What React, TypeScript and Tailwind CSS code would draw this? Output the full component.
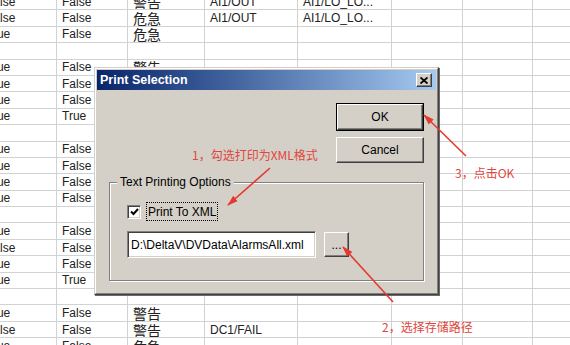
import React from "react";

const rows: string[][] = [
  ["False", "False", "警告", "AI1/OUT", "AI1/LO_LO..."],
  ["False", "False", "危急", "AI1/OUT", "AI1/LO_LO..."],
  ["True", "False", "危急"],
  [],
  ["True", "False", "警告"],
  ["True", "False"],
  ["True", "False"],
  ["True", "True"],
  [],
  ["True", "False"],
  ["True", "False"],
  ["True", "False"],
  ["True", "False"],
  [],
  ["True", "False"],
  ["False", "False"],
  ["True", "False"],
  ["True", "True"],
  [],
  ["True", "False", "警告"],
  ["False", "False", "警告", "DC1/FAIL"],
  ["True", "False", "危急"],
];

const isCjk = (s: string) => /[\u4e00-\u9fff]/.test(s);

function Sheet() {
  return (
    <div className="ml-[-19px] mt-[-6px] flex flex-col">
      {rows.map((row, r) => (
        <div
          key={r}
          className="grid h-[16.4px] grid-cols-[76px_71px_77px_93px_94px_71px_70px_80px] border-b border-[#d2d2d2]"
        >
          {Array.from({ length: 8 }).map((_, c) => {
            const v = row[c] ?? "";
            return (
              <div
                key={c}
                className="flex items-center overflow-hidden whitespace-nowrap border-r border-[#d2d2d2] pl-[5px] text-[12px] leading-none text-[#222]"
              >
                {isCjk(v) ? (
                  <span className="font-['Noto_Sans_CJK_SC',sans-serif] text-[14px]">{v}</span>
                ) : (
                  v
                )}
              </div>
            );
          })}
        </div>
      ))}
    </div>
  );
}

const raised =
  "border border-t-white border-l-white border-r-[#404040] border-b-[#404040] shadow-[inset_-1px_-1px_0_#808080] bg-[#d4d0c8]";
const sunken =
  "border border-t-[#808080] border-l-[#808080] border-r-white border-b-white shadow-[inset_1px_1px_0_#404040,inset_-1px_-1px_0_#d4d0c8] bg-white";

function Dialog() {
  return (
    <div className="absolute left-[94px] top-[67px] h-[228px] w-[345px] border border-t-[#d4d0c8] border-l-[#d4d0c8] border-r-[#404040] border-b-[#404040] bg-[#d4d0c8] shadow-[1px_1px_0_#6a6a6a]">
      <div className="flex h-full flex-col border border-t-white border-l-white border-r-[#808080] border-b-[#808080] p-px">
        <div className="flex h-[20px] items-center justify-between bg-linear-to-r from-[#0a246a] to-[#a6caf0] pl-[3px] pr-[4px]">
          <span className="text-[12.5px] font-bold text-white">Print Selection</span>
          <button className={`flex h-[14px] w-[16px] items-center justify-center ${raised}`}>
            <svg width="8" height="7" viewBox="0 0 8 7">
              <path d="M0.5 0.5 L7.5 6.5 M7.5 0.5 L0.5 6.5" stroke="#000" strokeWidth="1.8" />
            </svg>
          </button>
        </div>

        <div className="flex flex-col px-[12px] text-[12px] text-black">
          <div className="mt-[13px] flex flex-col items-end gap-[6px]">
            <button className="h-[28px] w-[88px] border border-black">
              <div className={`flex h-full w-full items-center justify-center ${raised}`}>OK</div>
            </button>
            <button className={`flex h-[26px] w-[88px] items-center justify-center ${raised}`}>
              Cancel
            </button>
          </div>

          <fieldset className="mt-[12px] border border-[#808080] pb-[22px] shadow-[1px_1px_0_#fff,inset_1px_1px_0_#fff]">
            <legend className="ml-[7px] bg-[#d4d0c8] px-[3px] leading-[14px]">Text Printing Options</legend>
            <div className="flex flex-col pl-[17px]">
              <label className="mt-[13px] flex h-[19px] items-center">
                <span className={`flex h-[14px] w-[14px] items-center justify-center ${sunken}`}>
                  <svg width="9" height="8" viewBox="0 0 9 8">
                    <path d="M1 3.5 L3.5 6 L8 1" fill="none" stroke="#000" strokeWidth="2" />
                  </svg>
                </span>
                <span className="ml-[5px] flex h-full items-center border border-dotted border-black px-px">
                  Print To XML
                </span>
              </label>
              <div className="mt-[10px] flex items-start">
                <div className={`flex h-[27px] w-[189px] items-center pl-[3px] ${sunken}`}>
                  D:\DeltaV\DVData\AlarmsAll.xml
                </div>
                <button className={`ml-[8px] mt-px flex h-[25px] w-[25px] items-end justify-center pb-[5px] leading-none ${raised}`}>
                  ...
                </button>
              </div>
            </div>
          </fieldset>
        </div>
      </div>
    </div>
  );
}

function Annotations() {
  return (
    <>
      <svg className="pointer-events-none absolute left-0 top-0" width="570" height="345">
        <defs>
          <marker
            id="head"
            markerUnits="userSpaceOnUse"
            markerWidth="11"
            markerHeight="8"
            refX="10"
            refY="4"
            orient="auto"
          >
            <path d="M0 0.5 L11 4 L0 7.5 z" fill="#e5392f" />
          </marker>
        </defs>
        <g stroke="#e5392f" strokeWidth="1.6" fill="none" markerEnd="url(#head)">
          <line x1="270" y1="168" x2="228" y2="205" />
          <line x1="466" y1="156" x2="424" y2="115" />
          <line x1="393" y1="302" x2="343" y2="247" />
        </g>
      </svg>
      <div className="pointer-events-none absolute left-[192px] top-[147px] font-['Noto_Sans_CJK_SC',sans-serif] text-[12px] leading-[16px] text-[#e0463c]">
        1，勾选打印为XML格式
      </div>
      <div className="pointer-events-none absolute left-[455px] top-[165px] font-['Noto_Sans_CJK_SC',sans-serif] text-[12px] leading-[16px] text-[#e0463c]">
        3，点击OK
      </div>
      <div className="pointer-events-none absolute left-[382px] top-[319px] font-['Noto_Sans_CJK_SC',sans-serif] text-[12px] leading-[16px] text-[#e0463c]">
        2，选择存储路径
      </div>
    </>
  );
}

export default function App() {
  return (
    <div className="relative h-[345px] w-[570px] overflow-hidden bg-white font-['Liberation_Sans','Noto_Sans_CJK_SC',sans-serif]">
      <Sheet />
      <Dialog />
      <Annotations />
    </div>
  );
}
